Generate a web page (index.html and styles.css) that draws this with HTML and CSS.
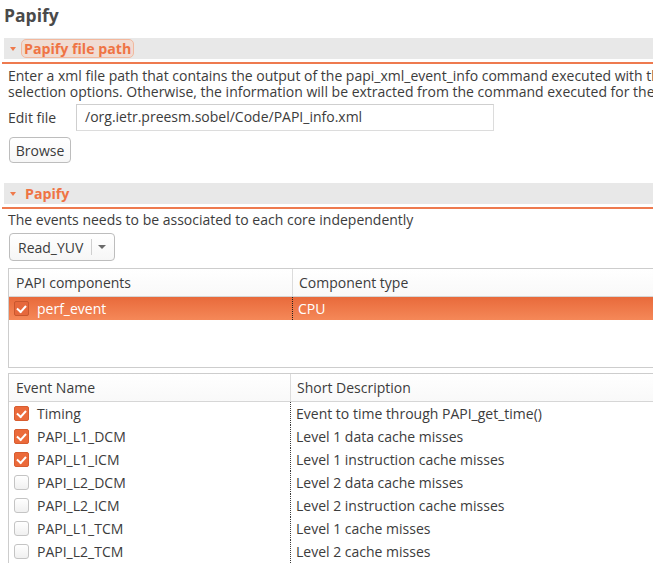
FILE: index.html
```html
<!DOCTYPE html>
<html>
<head>
<meta charset="utf-8">
<link rel="stylesheet" href="styles.css">
</head>
<body>
<div class="page">
  <h1 class="title">Papify</h1>

  <div class="sec-wrap">
    <div class="sec-head">
      <span class="twisty"></span>
      <span class="sec-title focus">Papify file path</span>
    </div>
  </div>
  <div class="desc">
    <div class="line">Enter a xml file path that contains the output of the papi_xml_event_info command executed with the</div>
    <div class="line">selection options. Otherwise, the information will be extracted from the command executed for the</div>
  </div>
  <div class="file-row">
    <span class="label">Edit file</span>
    <div class="input">/org.ietr.preesm.sobel/Code/PAPI_info.xml</div>
  </div>
  <button class="btn">Browse</button>

  <div class="sec-wrap sec2">
    <div class="sec-head">
      <span class="twisty"></span>
      <span class="sec-title">Papify</span>
    </div>
  </div>
  <p class="desc2">The events needs to be associated to each core independently</p>
  <div class="combo">
    <span class="combo-text">Read_YUV</span>
    <span class="combo-sep"></span>
    <span class="combo-arrow"></span>
  </div>

  <div class="table t1">
    <div class="thead">
      <div class="th c1">PAPI components</div>
      <div class="th c2">Component type</div>
    </div>
    <div class="tr selected">
      <div class="td c1"><span class="cb on sel"></span>perf_event</div>
      <div class="td c2">CPU</div>
    </div>
  </div>

  <div class="table t2">
    <div class="thead">
      <div class="th c1">Event Name</div>
      <div class="th c2">Short Description</div>
    </div>
    <div class="tr"><div class="td c1"><span class="cb on"></span>Timing</div><div class="td c2">Event to time through PAPI_get_time()</div></div>
    <div class="tr"><div class="td c1"><span class="cb on"></span>PAPI_L1_DCM</div><div class="td c2">Level 1 data cache misses</div></div>
    <div class="tr"><div class="td c1"><span class="cb on"></span>PAPI_L1_ICM</div><div class="td c2">Level 1 instruction cache misses</div></div>
    <div class="tr"><div class="td c1"><span class="cb"></span>PAPI_L2_DCM</div><div class="td c2">Level 2 data cache misses</div></div>
    <div class="tr"><div class="td c1"><span class="cb"></span>PAPI_L2_ICM</div><div class="td c2">Level 2 instruction cache misses</div></div>
    <div class="tr"><div class="td c1"><span class="cb"></span>PAPI_L1_TCM</div><div class="td c2">Level 1 cache misses</div></div>
    <div class="tr"><div class="td c1"><span class="cb"></span>PAPI_L2_TCM</div><div class="td c2">Level 2 cache misses</div></div>
  </div>
</div>
</body>
</html>
```

FILE: styles.css
```css
html, body {
  margin: 0;
  padding: 0;
  overflow: hidden;
  background: #ffffff;
}
.page {
  width: 760px;
  font-family: "Open Sans", "DejaVu Sans", sans-serif;
  font-size: 14px;
  color: #3c3c3c;
}
.title {
  margin: 0;
  height: 38px;
  line-height: 30px;
  padding-left: 4px;
  font-size: 17.5px;
  font-weight: bold;
  color: #4a4a4a;
}
.sec-wrap {
  margin-left: 2px;
  padding-bottom: 3px;
  border-bottom: 2px solid #ee7a4f;
}
.sec2 { margin-top: 20px; }
.sec-head {
  margin-left: 2px;
  height: 21px;
  background: #e8e8e8;
  display: flex;
  align-items: center;
}
.twisty {
  width: 0;
  height: 0;
  margin-left: 6px;
  margin-right: 7px;
  border-left: 3.5px solid transparent;
  border-right: 3.5px solid transparent;
  border-top: 4px solid #ef7a4c;
}
.sec-title {
  font-weight: bold;
  color: #ef7444;
  font-size: 14.2px;
  line-height: 17px;
  padding: 0 2px;
}
.focus {
  border: 1px solid #f2b89e;
  border-radius: 5px;
  background: #f0dcd3;
  margin-left: -2px;
}
.desc {
  margin: 4px 0 0 8px;
  white-space: nowrap;
}
.desc .line {
  height: 16px;
  line-height: 16px;
}
.file-row {
  margin-top: 4px;
  display: flex;
  align-items: center;
  height: 27px;
}
.label {
  width: 68px;
  padding-left: 8px;
  box-sizing: border-box;
}
.input {
  box-sizing: border-box;
  width: 418px;
  height: 27px;
  border: 1px solid #dcdcdc;
  border-top-color: #cfcfcf;
  border-left-color: #cfcfcf;
  padding-left: 8px;
  line-height: 24px;
  margin-left: 8px;
}
.btn {
  display: block;
  margin: 6px 0 0 9px;
  height: 26px;
  width: 62px;
  box-sizing: border-box;
  padding: 0;
  font: inherit;
  color: #3c3c3c;
  background: linear-gradient(#ffffff, #f7f7f7);
  border: 1px solid #bdbdbd;
  border-radius: 4px;
}
.desc2 {
  margin: 3px 0 0 8px;
  line-height: 16px;
}
.combo {
  margin: 5px 0 0 9px;
  box-sizing: border-box;
  width: 106px;
  height: 28px;
  border: 1px solid #bdbdbd;
  border-radius: 4px;
  background: linear-gradient(#ffffff, #f6f6f6);
  display: flex;
  align-items: center;
}
.combo-text {
  padding-left: 8px;
  width: 73px;
  box-sizing: border-box;
  white-space: nowrap;
  width: 81px;
}
.combo-sep {
  width: 1px;
  height: 16px;
  background: #cfcfcf;
}
.combo-arrow {
  margin-left: 6px;
  width: 0;
  height: 0;
  border-left: 4px solid transparent;
  border-right: 4px solid transparent;
  border-top: 4px solid #6a6a6a;
}
.table {
  margin-left: 8px;
  border: 1px solid #cdcdcd;
  border-right: none;
  box-sizing: border-box;
}
.t1 {
  margin-top: 7px;
  height: 100px;
}
.t2 {
  margin-top: 5px;
  height: 200px;
}
.thead {
  display: grid;
  height: 28px;
  background: linear-gradient(#ffffff, #f9f9f9);
  border-bottom: 1px solid #d6d6d6;
  box-sizing: border-box;
}
.tr {
  display: grid;
  height: 23px;
}
.t1 .thead, .t1 .tr { grid-template-columns: 283px 1fr; }
.t2 .thead, .t2 .tr { grid-template-columns: 281px 1fr; }
.th {
  display: flex;
  align-items: center;
  padding-left: 7px;
}
.th.c2 {
  border-left: 1px solid #dcdcdc;
  padding-left: 6px;
}
.td {
  display: flex;
  align-items: center;
  white-space: nowrap;
}
.td.c1 { padding-left: 5px; }
.td.c2 {
  border-left: 1px dotted #3c3c3c;
  padding-left: 5px;
}
.selected {
  background: linear-gradient(#e86a3b, #f58858);
  color: #ffffff;
}
.selected .td.c2 { border-left-color: #202020; }
.cb {
  position: relative;
  box-sizing: border-box;
  width: 15px;
  height: 15px;
  margin-right: 8px;
  border: 1px solid #c4c4c4;
  border-radius: 3px;
  background: linear-gradient(#ffffff, #f0f0f0);
}
.cb.on {
  border-color: #d85d30;
  border-radius: 2px;
  background: #eb6a3a;
}
.cb.sel {
  border-color: #c9572e;
  background: #e6683c;
}
.cb.on::after {
  content: "";
  position: absolute;
  left: 2px;
  top: 1px;
  width: 7px;
  height: 4px;
  border-left: 2px solid #ffffff;
  border-bottom: 2px solid #ffffff;
  transform: translate(0, 2px) rotate(-48deg);
}
```
